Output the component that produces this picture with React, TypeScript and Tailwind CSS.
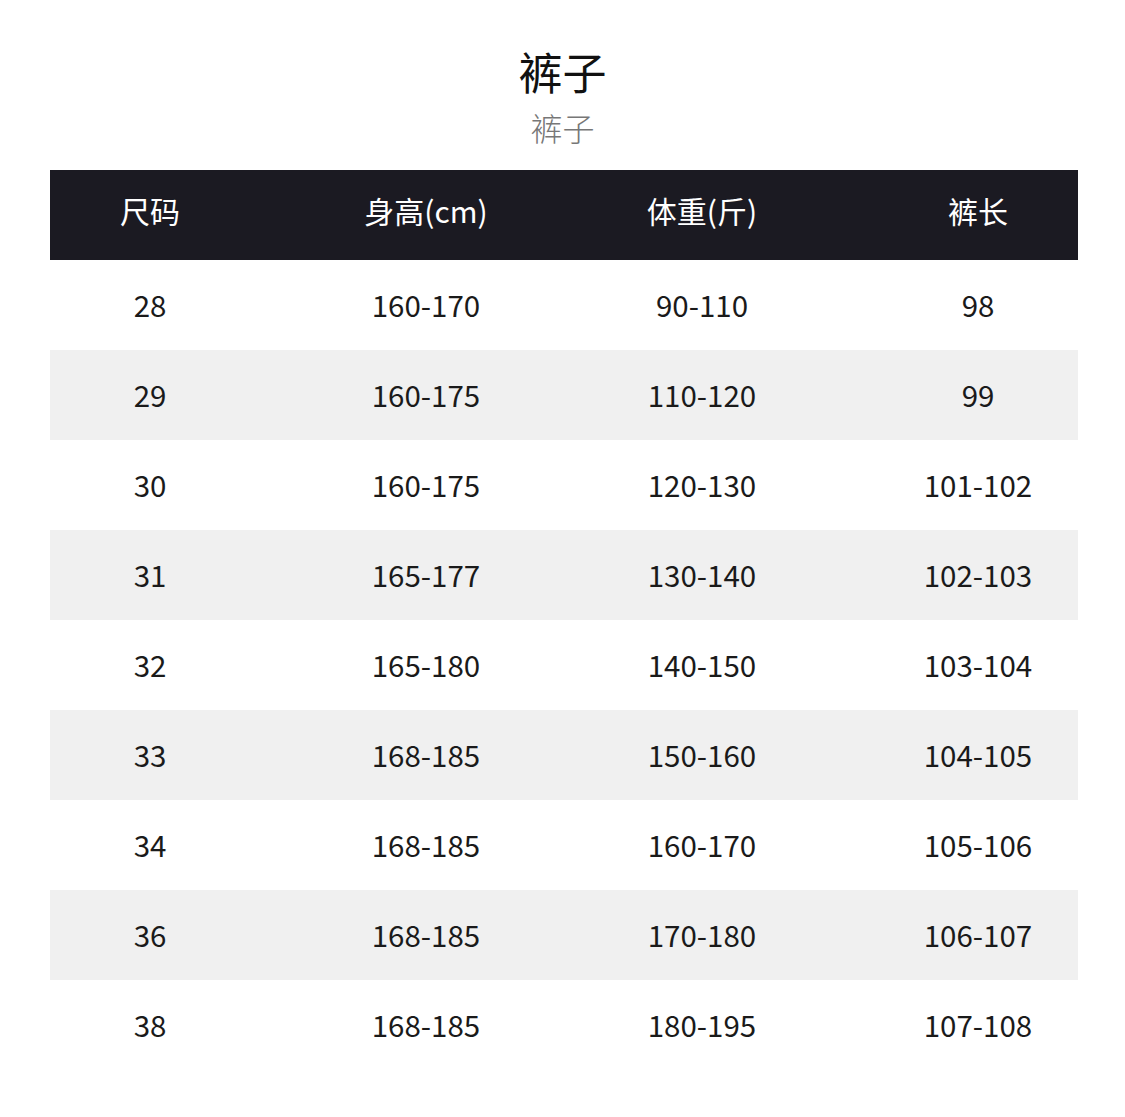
const ROWS = [
  ["28", "160-170", "90-110", "98"],
  ["29", "160-175", "110-120", "99"],
  ["30", "160-175", "120-130", "101-102"],
  ["31", "165-177", "130-140", "102-103"],
  ["32", "165-180", "140-150", "103-104"],
  ["33", "168-185", "150-160", "104-105"],
  ["34", "168-185", "160-170", "105-106"],
  ["36", "168-185", "170-180", "106-107"],
  ["38", "168-185", "180-195", "107-108"],
];

const HEAD = ["尺码", "身高(cm)", "体重(斤)", "裤长"];

function Row({ cells, className }: { cells: string[]; className: string }) {
  return (
    <div className={`grid h-[90px] grid-cols-[200px_200px_200px_200px] items-center justify-between ${className}`}>
      {cells.map((cell, i) => (
        <span key={i} className="text-center">
          {cell}
        </span>
      ))}
    </div>
  );
}

export default function App() {
  return (
    <div
      className="min-h-[1117px] w-[1125px] bg-white pt-[43px]"
      style={{ fontFamily: '"Noto Sans CJK SC", "Noto Sans", sans-serif' }}
    >
      <h1 className="text-center text-[44px] leading-[56px] text-[#111]">裤子</h1>
      <p className="mt-[8px] text-center text-[32px] font-light leading-[40px] text-[#777]">裤子</p>

      <div className="ml-[50px] mt-[23px] flex w-[1028px] flex-col">
        <Row cells={HEAD} className="bg-[#1b1a22] pb-[10px] text-[30px] text-white" />
        {ROWS.map((row, i) => (
          <Row
            key={row[0]}
            cells={row}
            className={`pb-[2px] text-[29.5px] text-[#1a1a1a] ${i % 2 === 1 ? "bg-[#f0f0f0]" : "bg-white"}`}
          />
        ))}
      </div>
    </div>
  );
}
